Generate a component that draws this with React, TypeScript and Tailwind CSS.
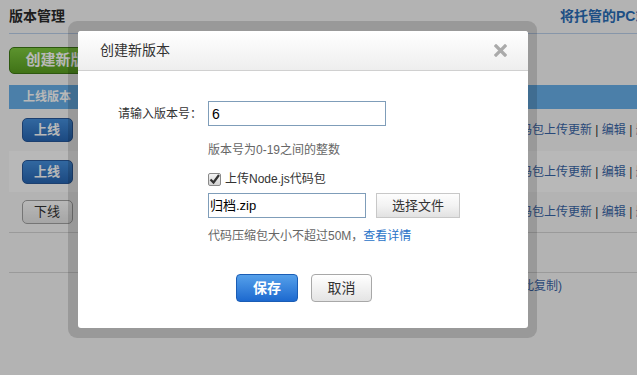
import { type ReactNode } from "react";

const rows = [
    { action: "上线", online: false, band: false },
    { action: "上线", online: false, band: true },
    { action: "下线", online: true, band: false },
];

function RowButton({ children, online }: { children: ReactNode; online: boolean }) {
    return (
        <button
            className={
                online
                    ? "h-[24px] w-[51px] rounded-[5px] border border-[#a3a3a3] bg-gradient-to-b from-white to-[#e6e6e6] text-[13px] text-[#333]"
                    : "h-[24px] w-[51px] rounded-[5px] border border-[#28589a] bg-gradient-to-b from-[#4590de] to-[#2766b3] text-[13px] font-bold text-white"
            }
        >
            {children}
        </button>
    );
}

function CloseIcon() {
    return (
        <svg width="13" height="13" viewBox="0 0 13 13" className="text-[#aaa]">
            <path d="M2 2 L11 11 M11 2 L2 11" stroke="currentColor" strokeWidth="3.2" strokeLinecap="square" />
        </svg>
    );
}

function CheckBox() {
    return (
        <span className="flex h-[13px] w-[13px] items-center justify-center rounded-[2px] border border-[#8a8a8a] bg-gradient-to-b from-[#f4f4f4] to-[#d2d2d2]">
            <svg width="11" height="11" viewBox="0 0 11 11">
                <path d="M1.5 5.5 L4.5 8.5 L10 1" stroke="#333" strokeWidth="2.2" fill="none" />
            </svg>
        </span>
    );
}

export default function App() {
    return (
        <div className="relative h-[375px] w-[637px] overflow-hidden bg-[#f8f8f8] font-['Liberation_Sans','Noto_Sans_CJK_SC',sans-serif] text-[12px] text-[#333]">
            {/* page behind the dialog */}
            <div className="pl-[9px]">
                <div className="flex h-[34px] items-center whitespace-nowrap border-b border-[#bcd0ea]">
                    <h1 className="w-[551px] shrink-0 text-[14px] font-bold text-[#2a2a2a]">版本管理</h1>
                    <a className="text-[14px] font-bold text-[#2a6eb8]">将托管的PC站点迁移到新版本</a>
                </div>

                <button className="mt-[13px] h-[27px] w-[108px] rounded-[5px] border border-[#3f7a15] bg-gradient-to-b from-[#80cc40] to-[#5aa020] text-[15px] font-bold text-white">
                    创建新版本
                </button>

                <div className="mt-[11px]">
                    <div className="flex h-[24px] items-center bg-[#68b0ea] text-[12px] font-bold text-white">
                        <div className="w-[76px] text-center">上线版本</div>
                    </div>

                    {rows.map((r, i) => (
                        <div
                            key={i}
                            className={`flex items-center whitespace-nowrap ${i === 0 ? "h-[42px]" : "h-[41px]"} ${r.band ? "bg-white" : ""} ${i === 2 ? "border-b border-[#d6d6d6]" : ""}`}
                        >
                            <div className="flex w-[76px] shrink-0 justify-center">
                                <RowButton online={r.online}>{r.action}</RowButton>
                            </div>
                            <div className="w-[423px] shrink-0" />
                            <div className="text-[12px] text-[#3a66a8]">
                                代码包上传更新<span className="text-[#333]"> | </span>编辑<span className="text-[#333]"> | </span>删除
                            </div>
                        </div>
                    ))}

                    <div className="h-[40px] border-b border-[#d6d6d6]" />
                    <div className="flex h-[26px] w-[553px] items-center justify-end whitespace-nowrap text-[12px] text-[#3a66a8]">
                        (点此复制)
                    </div>
                </div>
            </div>

            {/* mask */}
            <div className="absolute inset-0 bg-black/[0.28]" />

            {/* dialog */}
            <div className="absolute left-[68px] top-[21px] h-[317px] w-[469px] rounded-[9px] bg-black/[0.14] pb-[10px] pl-[10px] pr-[9px] pt-[10px]">
                <div className="h-full overflow-hidden rounded-[3px] bg-white">
                    <div className="flex h-[40px] items-center justify-between border-b border-[#d0d0d0] bg-gradient-to-b from-white to-[#eeeeee] pl-[22px] pr-[21px]">
                        <span className="text-[14px] text-[#333]">创建新版本</span>
                        <CloseIcon />
                    </div>

                    <div className="pt-[30px]">
                        <div className="flex items-center">
                            <label className="w-[124px] text-right text-[12px] text-[#333]">请输入版本号：</label>
                            <input
                                defaultValue="6"
                                className="ml-[6px] h-[25px] w-[178px] border border-[#7f9db9] px-[3px] text-[14px] text-black outline-none"
                            />
                        </div>

                        <div className="ml-[130px]">
                            <p className="mt-[16px] text-[12px] leading-[16px] text-[#666]">版本号为0-19之间的整数</p>

                            <label className="mt-[13px] flex h-[16px] items-center gap-[4px] text-[12px] text-[#333]">
                                <CheckBox />
                                上传Node.js代码包
                            </label>

                            <div className="mt-[6px] flex items-center gap-[10px]">
                                <div className="flex h-[25px] w-[158px] items-center border border-[#7f9db9] px-[1px] text-[13px] text-black">
                                    归档.zip
                                </div>
                                <button className="h-[25px] w-[84px] border border-[#c8c8c8] bg-gradient-to-b from-[#fdfdfd] via-[#f3f3f3] to-[#e2e2e2] text-[13px] text-[#333]">
                                    选择文件
                                </button>
                            </div>

                            <p className="mt-[10px] text-[12px] leading-[16px] text-[#666]">
                                代码压缩包大小不超过50M，<a className="text-[#2a73c8]">查看详情</a>
                            </p>
                        </div>

                        <div className="mt-[30px] flex justify-center gap-[13px] pl-[2px]">
                            <button className="h-[28px] w-[62px] rounded-[4px] border border-[#1a5db5] bg-gradient-to-b from-[#55a0ea] to-[#1c69cf] text-[14px] font-bold text-white">
                                保存
                            </button>
                            <button className="h-[28px] w-[61px] rounded-[4px] border border-[#a8a8a8] bg-gradient-to-b from-white to-[#e4e4e4] text-[14px] text-[#333]">
                                取消
                            </button>
                        </div>
                    </div>
                </div>
            </div>
        </div>
    );
}
